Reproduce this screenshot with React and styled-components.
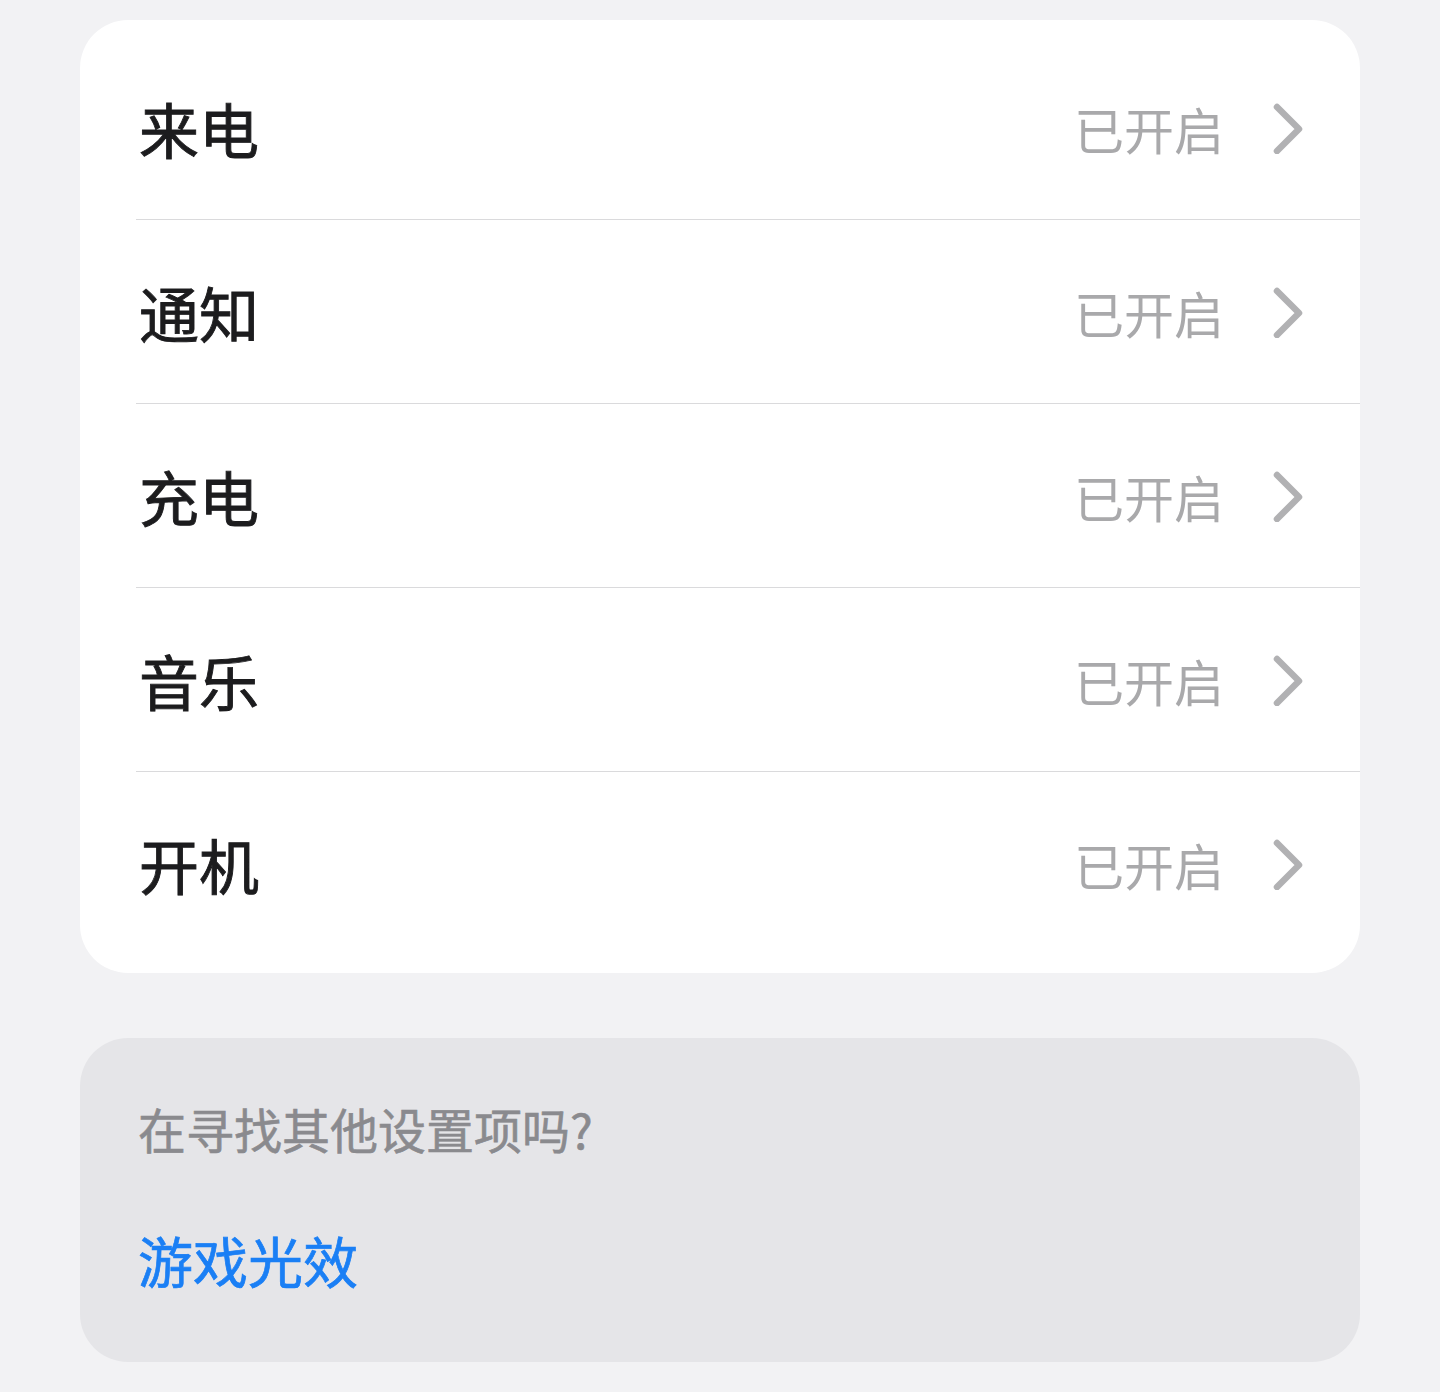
import React from 'react';
import styled, {createGlobalStyle} from 'styled-components';

const GlobalStyle = createGlobalStyle`
  html, body {
    margin: 0;
    padding: 0;
    background: #f2f2f4;
  }
  body {
    font-family: "Noto Sans CJK SC", "Noto Sans", sans-serif;
  }
`;

const Page = styled.div`
  width: 1440px;
  min-height: 1392px;
  box-sizing: border-box;
  padding: 20px 80px 31px;
  display: flex;
  flex-direction: column;
  gap: 65px;
`;

const Card = styled.div`
  background: #ffffff;
  border-radius: 48px;
  padding: 16px 0 17px 56px;
`;

const Row = styled.div`
  height: 184px;
  display: flex;
  align-items: center;
  padding-right: 56px;
  border-bottom: ${p => (p.last ? 'none' : '1.5px solid #dadadc')};
  box-sizing: border-box;
`;

const Title = styled.span`
  flex: 1;
  padding-left: 3px;
  font-size: 60px;
  font-weight: 400;
  -webkit-text-stroke: 0.9px #1c1c1e;
  color: #1c1c1e;
  line-height: 1;
`;

const Status = styled.span`
  font-size: 50px;
  color: #a9a9ab;
  line-height: 1;
  margin-right: 48px;
`;

const Chevron = () => (
  <svg width="32" height="52" viewBox="0 0 32 52">
    <path d="M5 5 L27 27 L5 49" fill="none" stroke="#b1b1b3" strokeWidth="6.5"
      strokeLinecap="round" strokeLinejoin="round"/>
  </svg>
);

const InfoCard = styled.div`
  background: #e5e5e8;
  border-radius: 48px;
  padding: 62px 58px 70px;
  display: flex;
  flex-direction: column;
  gap: 68px;
`;

const Hint = styled.div`
  font-size: 48px;
  color: #8a8a8e;
  -webkit-text-stroke: 0.6px #8a8a8e;
  line-height: 1.2;
`;

const Link = styled.a`
  font-size: 55px;
  color: #1a7ff5;
  -webkit-text-stroke: 0.7px #1a7ff5;
  line-height: 1.2;
  text-decoration: none;
`;

const items = ['来电', '通知', '充电', '音乐', '开机'];

export default function App() {
  return (
    <>
      <GlobalStyle/>
      <Page>
        <Card>
          {items.map((name, i) => (
            <Row key={name} last={i === items.length - 1}>
              <Title>{name}</Title>
              <Status>已开启</Status>
              <Chevron/>
            </Row>
          ))}
        </Card>
        <InfoCard>
          <Hint>在寻找其他设置项吗?</Hint>
          <Link href="#">游戏光效</Link>
        </InfoCard>
      </Page>
    </>
  );
}
